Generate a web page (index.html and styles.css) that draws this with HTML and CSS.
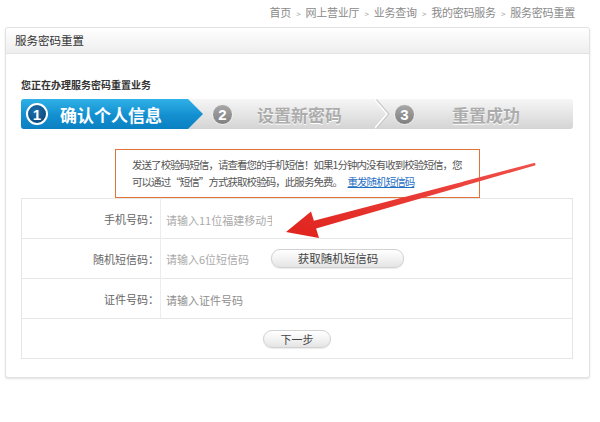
FILE: index.html
```html
<!DOCTYPE html>
<html lang="zh-CN">
<head>
    <meta charset="UTF-8">
    <title>服务密码重置</title>
    <link rel="stylesheet" href="styles.css">
</head>
<body>
    <div class="crumbs">
        首页<span class="sep">&gt;</span>网上营业厅<span class="sep">&gt;</span>业务查询<span class="sep">&gt;</span>我的密码服务<span class="sep">&gt;</span>服务密码重置
    </div>

    <div class="panel">
        <div class="panel-head">服务密码重置</div>
        <div class="panel-body">
            <div class="intro">您正在办理服务密码重置业务</div>

            <div class="steps">
                <div class="step step-active">
                    <span class="num">1</span>
                    <span class="step-text">确认个人信息</span>
                </div>
                <div class="step step-two">
                    <span class="num">2</span>
                    <span class="step-text">设置新密码</span>
                </div>
                <svg class="chevron" width="16" height="30" viewBox="0 0 16 30">
                    <polyline points="1,1 13,15 1,29" fill="none" stroke="#c9c9c9" stroke-width="2.5"/>
                    <polyline points="0,1 12,15 0,29" fill="none" stroke="#ffffff" stroke-width="1.5"/>
                </svg>
                <div class="step step-three">
                    <span class="num">3</span>
                    <span class="step-text">重置成功</span>
                </div>
            </div>

            <div class="notice">
                <span class="line">发送了校验码短信，请查看您的手机短信！如果1分钟内没有收到校验短信，您</span>
                <span class="line">可以通过“短信”方式获取校验码，此服务免费。 <a href="#">重发随机短信码</a></span>
            </div>

            <table class="form">
                <tr>
                    <td class="label">手机号码：</td>
                    <td><input class="field field-phone" type="text" placeholder="请输入11位福建移动手机号码"></td>
                </tr>
                <tr>
                    <td class="label">随机短信码：</td>
                    <td>
                        <input class="field field-code" type="text" placeholder="请输入6位短信码">
                        <button class="btn btn-sms">获取随机短信码</button>
                    </td>
                </tr>
                <tr>
                    <td class="label">证件号码：</td>
                    <td><input class="field field-id" type="text" placeholder="请输入证件号码"></td>
                </tr>
                <tr>
                    <td class="actions" colspan="2"><button class="btn btn-next">下一步</button></td>
                </tr>
            </table>
        </div>
    </div>

    <!-- red annotation arrow drawn over the form -->
    <svg class="annot" width="600" height="422" viewBox="0 0 600 422">
        <defs>
            <linearGradient id="arrowRed" x1="1" y1="0" x2="0" y2="1">
                <stop offset="0" stop-color="#f0504a"/>
                <stop offset="1" stop-color="#e0221c"/>
            </linearGradient>
        </defs>
        <polygon points="535,162.8 313.9,220.7 311,211.5 286,232 319,238 316.1,228.5 535.6,165.2" fill="url(#arrowRed)"/>
    </svg>
</body>
</html>
```

FILE: styles.css
```css
body {
    margin: 0;
    padding: 0;
    background: #fff;
    font-family: "Noto Sans CJK SC", "Liberation Sans", sans-serif;
    color: #333;
    position: relative;
    width: 600px;
    height: 422px;
    overflow: hidden;
}

.crumbs {
    height: 27px;
    line-height: 24px;
    text-align: right;
    padding-right: 25px;
    font-size: 11px;
    color: #8a8a8a;
    letter-spacing: -0.2px;
}

.crumbs .sep {
    margin: 0 5px;
    font-size: 8px;
    color: #999;
}

.panel {
    margin: 0 10px 0 5px;
    height: 349px;
    border: 1px solid #e2e2e2;
    border-radius: 3px;
    box-shadow: 0 1px 2px rgba(0, 0, 0, 0.12);
    background: #fff;
}

.panel-head {
    height: 25px;
    line-height: 25px;
    padding-left: 9px;
    font-size: 11.5px;
    color: #333;
    background: linear-gradient(#ffffff, #eeeeee);
    border-bottom: 1px solid #e3e3e3;
    border-radius: 3px 3px 0 0;
}

.panel-body {
    padding: 0 16px 0 15px;
}

.intro {
    margin-top: 23px;
    line-height: 16px;
    font-size: 10px;
    font-weight: bold;
    color: #333;
}

.steps {
    margin-top: 6px;
    height: 30px;
    display: flex;
    align-items: center;
    border-radius: 3px;
    background: linear-gradient(#f6f6f6, #e2e2e2 60%, #d4d4d4);
    overflow: hidden;
}

.step {
    height: 30px;
    display: flex;
    align-items: center;
    box-sizing: border-box;
}

.step-text {
    font-size: 17px;
    font-weight: bold;
    color: #acacac;
    text-shadow: 0 1px 0 #fff;
}

.num {
    width: 21px;
    height: 21px;
    border-radius: 50%;
    box-sizing: border-box;
    display: flex;
    align-items: center;
    justify-content: center;
    font-family: "Liberation Sans", Arial, sans-serif;
    font-weight: bold;
    font-size: 15px;
    color: #fff;
    background: linear-gradient(#a8a8a8, #7f7f7f);
    border: 1px solid #eee;
}

.step-active {
    width: 182px;
    padding-left: 5px;
    background: linear-gradient(#2fb0e6, #138fd0 55%, #0a80c2);
    clip-path: polygon(0 0, 167px 0, 182px 50%, 167px 100%, 0 100%);
}

.step-active .num {
    width: 22px;
    height: 22px;
    background: radial-gradient(circle at 40% 35%, #1a6fae, #083f70);
    border: 2px solid #fff;
}

.step-active .step-text {
    margin-left: 12px;
    color: #fff;
    text-shadow: none;
}

.step-two {
    width: 172px;
    padding-left: 9px;
}

.step-two .step-text {
    margin-left: 24px;
}

.chevron {
    flex: none;
    display: block;
}

.step-three {
    flex: 1;
    padding-left: 3px;
}

.step-three .step-text {
    margin-left: 37px;
}

.notice {
    margin: 20px 0 0 94px;
    width: 365px;
    height: 49px;
    box-sizing: border-box;
    border: 1px solid #e0733a;
    padding: 6px 0 0 16px;
    font-size: 10.5px;
    line-height: 17px;
    letter-spacing: -0.95px;
    color: #555;
}

.notice .line {
    display: block;
    white-space: nowrap;
}

.notice a {
    margin-left: 4px;
    color: #1f6fc4;
    text-decoration: underline;
}

.form {
    width: 100%;
    border-collapse: collapse;
    border: 1px solid #e6e6e6;
}

.form td {
    height: 39px;
    padding: 0;
    border-top: 1px solid #e6e6e6;
    font-size: 11px;
}

.form td.label {
    width: 137px;
    text-align: right;
    padding-right: 1px;
    color: #666;
    border-right: 1px solid #ececec;
}

.field {
    margin-left: 5px;
    border: none;
    outline: none;
    padding: 0;
    font-family: inherit;
    font-size: 11px;
    color: #333;
    background: transparent;
    vertical-align: middle;
}

.field::placeholder {
    color: #aaaaaa;
}

.field-phone {
    width: 106px;
}

.field-code {
    width: 103px;
}

.field-id {
    width: 200px;
}

.field-id::placeholder {
    color: #8e8e8e;
}

.btn {
    font-family: inherit;
    font-weight: normal;
    color: #444;
    border: 1px solid #d2d2d2;
    border-radius: 9px;
    background: linear-gradient(#ffffff, #f3f3f3 50%, #e4e4e4);
    box-shadow: 0 1px 1px rgba(0, 0, 0, 0.08);
    padding: 0;
    vertical-align: middle;
    cursor: pointer;
}

.btn-sms {
    width: 133px;
    height: 19px;
    font-size: 11.5px;
    line-height: 17px;
}

.form td.actions {
    text-align: center;
}

.btn-next {
    width: 68px;
    height: 18px;
    font-size: 11px;
    line-height: 16px;
}

.annot {
    position: absolute;
    left: 0;
    top: 0;
    pointer-events: none;
}
```
